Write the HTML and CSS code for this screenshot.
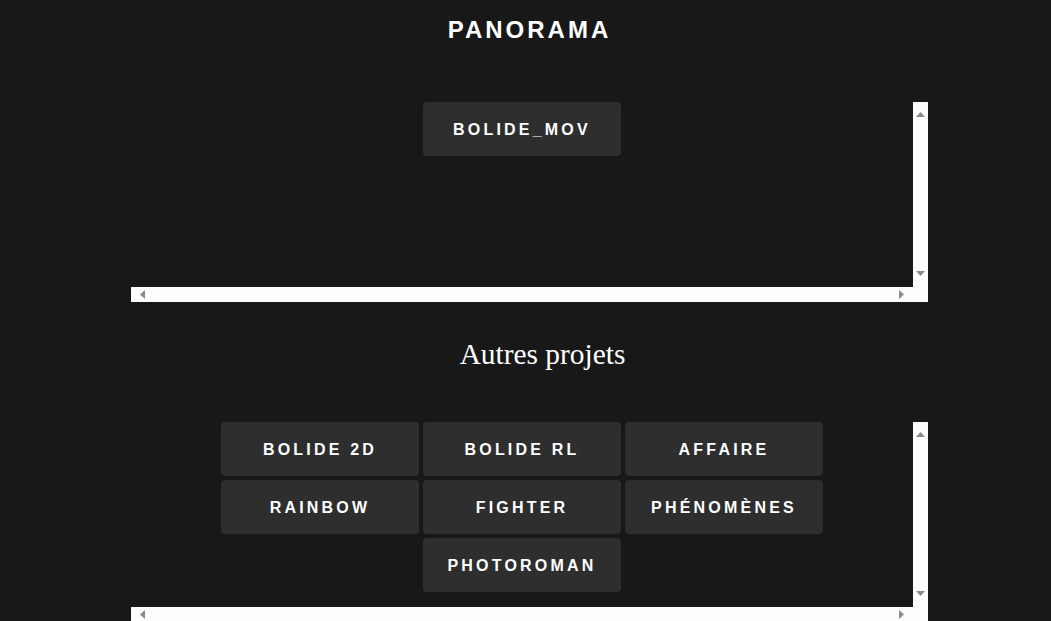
FILE: index.html
```html
<!DOCTYPE html>
<html lang="fr">
<head>
<meta charset="utf-8">
<title>Panorama</title>
<link rel="stylesheet" href="styles.css">
</head>
<body>
<h1 class="title">PANORAMA</h1>
<div class="frame">
  <div class="viewport">
    <div class="grid">
      <a class="btn" href="#">BOLIDE_MOV</a>
    </div>
  </div>
  <div class="vbar">
    <svg class="arrow-v" viewBox="0 0 9 5" width="9" height="5"><polygon points="4.5,0 9,5 0,5" /></svg>
    <svg class="arrow-v" viewBox="0 0 9 5" width="9" height="5"><polygon points="0,0 9,0 4.5,5" /></svg>
  </div>
  <div class="hbar">
    <svg class="arrow-h" viewBox="0 0 5 9" width="5" height="9"><polygon points="5,0 5,9 0,4.5" /></svg>
    <svg class="arrow-h" viewBox="0 0 5 9" width="5" height="9"><polygon points="0,0 5,4.5 0,9" /></svg>
  </div>
  <div class="corner"></div>
</div>
<h2 class="subtitle">Autres projets</h2>
<div class="frame">
  <div class="viewport">
    <div class="grid">
      <a class="btn" href="#">BOLIDE 2D</a>
      <a class="btn" href="#">BOLIDE RL</a>
      <a class="btn" href="#">AFFAIRE</a>
      <a class="btn" href="#">RAINBOW</a>
      <a class="btn" href="#">FIGHTER</a>
      <a class="btn" href="#">PHÉNOMÈNES</a>
      <a class="btn" href="#">PHOTOROMAN</a>
    </div>
  </div>
  <div class="vbar">
    <svg class="arrow-v" viewBox="0 0 9 5" width="9" height="5"><polygon points="4.5,0 9,5 0,5" /></svg>
    <svg class="arrow-v" viewBox="0 0 9 5" width="9" height="5"><polygon points="0,0 9,0 4.5,5" /></svg>
  </div>
  <div class="hbar">
    <svg class="arrow-h" viewBox="0 0 5 9" width="5" height="9"><polygon points="5,0 5,9 0,4.5" /></svg>
    <svg class="arrow-h" viewBox="0 0 5 9" width="5" height="9"><polygon points="0,0 5,4.5 0,9" /></svg>
  </div>
  <div class="corner"></div>
</div>
</body>
</html>
```
FILE: styles.css
```css
html {
  overflow: hidden;
  background: #181818;
}
body {
  margin: 0;
  padding: 0 0 0 8px;
  background: #181818;
  color: #ffffff;
  font-family: "Liberation Sans", Arial, sans-serif;
}
.title {
  margin: 16px 0 0;
  font-size: 24px;
  line-height: 28px;
  font-weight: bold;
  letter-spacing: 3px;
  text-align: center;
}
.frame {
  width: 797px;
  height: 200px;
  margin: 58px auto 0;
  display: grid;
  grid-template-columns: 782px 15px;
  grid-template-rows: 185px 15px;
}
.viewport {
  overflow: hidden;
  min-width: 0;
  min-height: 0;
}
.vbar {
  background: #fdfdfd;
  display: flex;
  flex-direction: column;
  justify-content: space-between;
  align-items: center;
  padding: 10px 0 11px;
}
.hbar {
  background: #fdfdfd;
  display: flex;
  justify-content: space-between;
  align-items: center;
  padding: 0 9px;
}
.corner {
  background: #fdfdfd;
}
.arrow-v,
.arrow-h {
  display: block;
  fill: #8a8a8a;
}
.grid {
  display: flex;
  flex-wrap: wrap;
  justify-content: center;
  gap: 4px;
}
.btn {
  width: 198px;
  height: 54px;
  box-sizing: border-box;
  padding-top: 2px;
  display: flex;
  align-items: center;
  justify-content: center;
  background: #2e2e2e;
  border-radius: 4px;
  color: #ffffff;
  text-decoration: none;
  font-size: 16px;
  font-weight: bold;
  letter-spacing: 3.2px;
}
.subtitle {
  margin: 35px 0 0;
  padding-left: 26px;
  font-family: "Liberation Serif", "Times New Roman", serif;
  font-weight: normal;
  font-size: 29.4px;
  line-height: 34px;
  text-align: center;
}
.subtitle + .frame {
  margin-top: 51px;
}
```
